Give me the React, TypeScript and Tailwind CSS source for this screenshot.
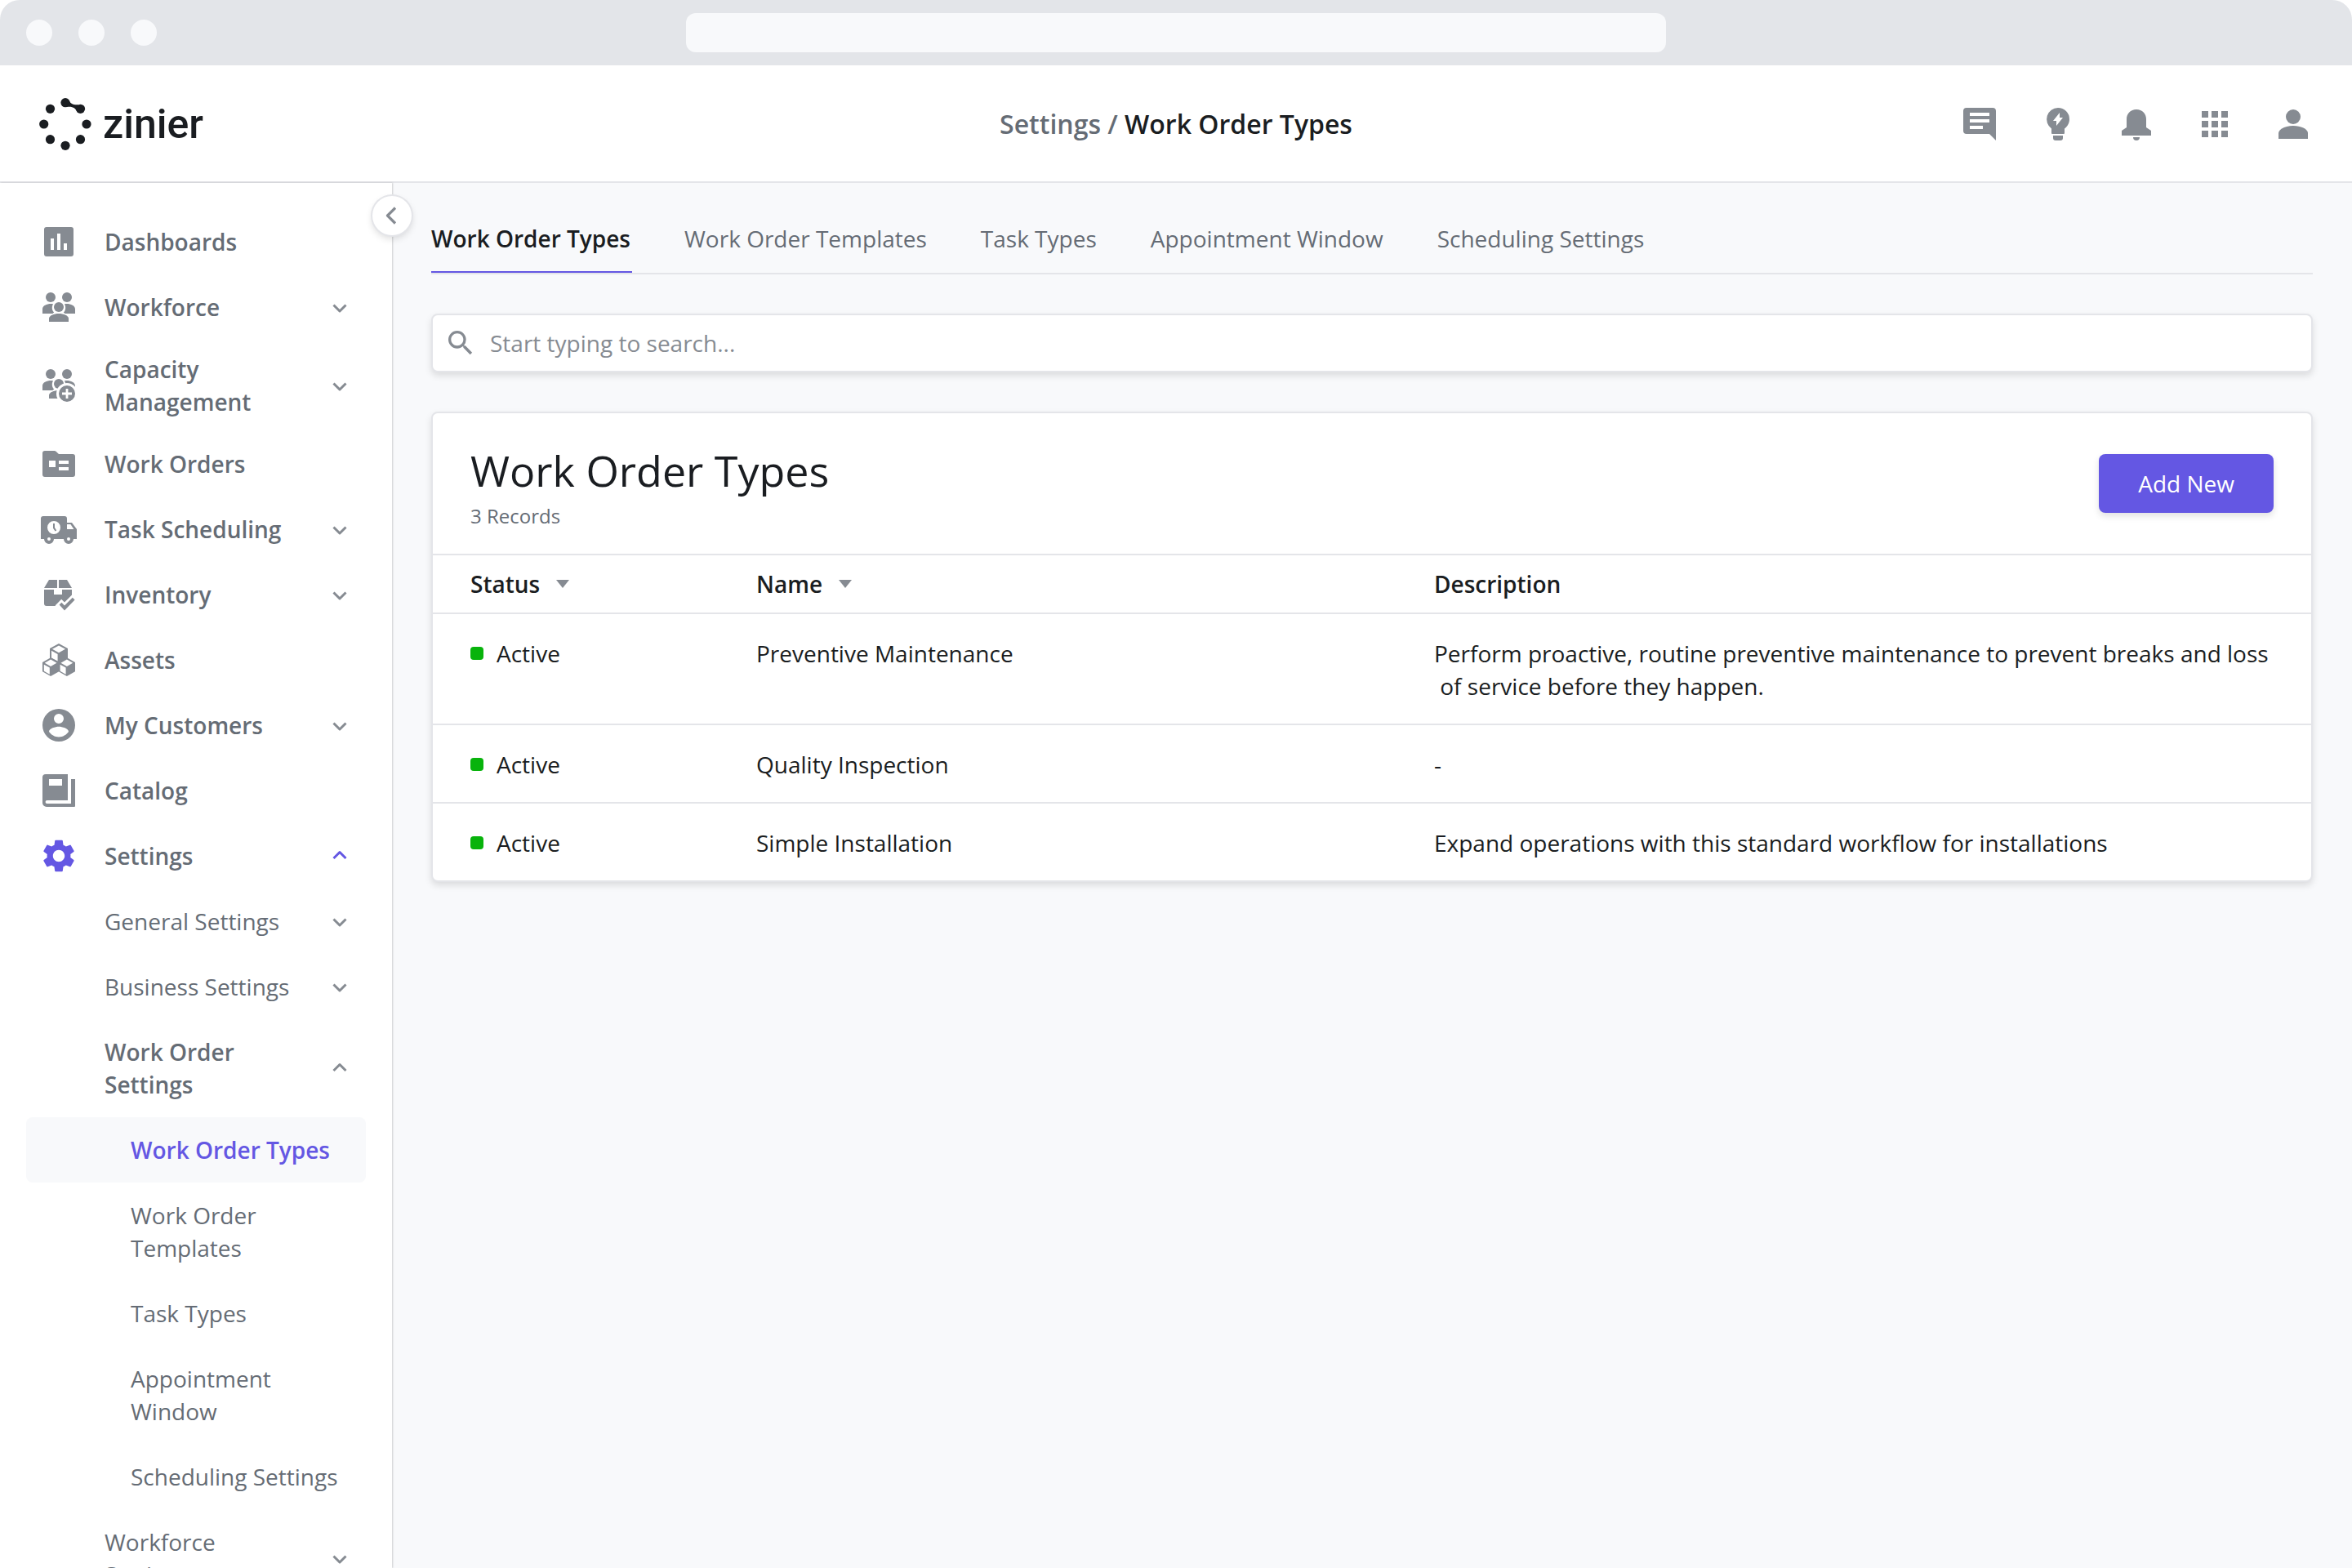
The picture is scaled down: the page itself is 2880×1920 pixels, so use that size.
import type { ReactNode } from "react";
import { clsx } from "clsx";
import { MdApps, MdSearch, MdSettings } from "react-icons/md";

const Icon = ({ children }: { children: ReactNode }) => (
  <svg viewBox="0 0 24 24" fill="currentColor" className="size-12 shrink-0" aria-hidden="true">
    {children}
  </svg>
);

const DashboardIcon = () => (
  <Icon>
    <path
      fillRule="evenodd"
      d="M4.5 3h15A1.5 1.5 0 0 1 21 4.5v15a1.5 1.5 0 0 1-1.5 1.5h-15A1.5 1.5 0 0 1 3 19.5v-15A1.5 1.5 0 0 1 4.5 3zM7 10v7h2v-7H7zm4-3v10h2V7h-2zm4 6v4h2v-4h-2z"
    />
  </Icon>
);

const WorkforceIcon = () => (
  <Icon>
    <circle cx="7" cy="6" r="3" />
    <circle cx="17" cy="6" r="3" />
    <path d="M2 16v-2.8C2 11.2 4.6 10 7.2 10c.5 0 .9 0 1.3.1-.6 1.1-.8 2.5-.4 3.7.2.6.5 1.1 1 1.5-.3.2-.6.4-.9.7H2z" />
    <path d="M22 16v-2.8C22 11.2 19.4 10 16.8 10c-.5 0-.9 0-1.3.1.6 1.1.8 2.5.4 3.7-.2.6-.5 1.1-1 1.5.3.2.6.4.9.7H22z" />
    <circle cx="12" cy="12" r="3" />
    <path d="M12 16c-3 0-6 1.3-6 3v2h12v-2c0-1.7-3-3-6-3z" />
  </Icon>
);

const CapacityIcon = () => (
  <Icon>
    <mask id="capacity-cut">
      <rect width="24" height="24" fill="white" />
      <circle cx="17" cy="17" r="6.5" fill="black" />
    </mask>
    <g mask="url(#capacity-cut)">
      <circle cx="7" cy="5" r="3" />
      <circle cx="17" cy="5" r="3" />
      <path d="M2 15v-2.8C2 10.2 4.6 9 7.2 9c.5 0 .9 0 1.3.1-.6 1.1-.8 2.5-.4 3.7.2.6.5 1.1 1 1.5-.3.2-.6.4-.9.7H2z" />
      <path d="M22 15v-2.8C22 10.2 19.4 9 16.8 9c-.5 0-.9 0-1.3.1.6 1.1.8 2.5.4 3.7L22 15z" />
      <circle cx="12" cy="11" r="3" />
      <path d="M12 15c-3 0-6 1.3-6 3v2h12v-2c0-1.7-3-3-6-3z" />
    </g>
    <path
      fillRule="evenodd"
      d="M17 12a5 5 0 1 1 0 10 5 5 0 0 1 0-10zm-.7 2v2.3H14v1.4h2.3V20h1.4v-2.3H20v-1.4h-2.3V14h-1.4z"
    />
  </Icon>
);

const WorkOrderIcon = () => (
  <Icon>
    <path
      fillRule="evenodd"
      d="M3.5 4h5.7c.5 0 .9.2 1.2.5L12 6h8.5A1.5 1.5 0 0 1 22 7.5v11a1.5 1.5 0 0 1-1.5 1.5h-17A1.5 1.5 0 0 1 2 18.5v-13A1.5 1.5 0 0 1 3.5 4zM6 10v4h4v-4H6zm6 0v2h6v-2h-6zm0 4v2h6v-2h-6z"
    />
  </Icon>
);

const TruckIcon = () => (
  <Icon>
    <path
      fillRule="evenodd"
      d="M2.5 4h13A1.5 1.5 0 0 1 17 5.5V8h3l3 4v6h-2a3 3 0 0 1-6 0H9a3 3 0 0 1-6 0H1V5.5A1.5 1.5 0 0 1 2.5 4zM9 7a4 4 0 1 0 0 8 4 4 0 0 0 0-8zm8 2v3h4.2l-2-3H17zM6 17a1 1 0 1 0 0 2 1 1 0 0 0 0-2zm12 0a1 1 0 1 0 0 2 1 1 0 0 0 0-2z"
    />
    <path d="M9 8.5v2.7l1.2 1.8" fill="none" stroke="currentColor" strokeWidth="1" />
  </Icon>
);

const InventoryIcon = () => (
  <Icon>
    <path d="M6 3h5v5H3l3-5zM12 3h5l3 5h-8V3z" />
    <path d="M3 9h6v3h5V9h6v3.2l-4.5 4.5-1.9-1.8L9.9 18.6V19H4.5A1.5 1.5 0 0 1 3 17.5V9z" />
    <path d="M12.3 18.3l3.2 3.4 6.3-6.4-1.4-1.4-4.9 4.9-1.8-1.9z" />
  </Icon>
);

const Cube = ({ transform }: { transform?: string }) => (
  <path
    transform={transform}
    fillRule="evenodd"
    d="M12 2l5.5 3v6L12 14l-5.5-3V5L12 2zm0 1.2L8 5.4l4 2.2 4-2.2-4-2.2zM7.5 6.4v4.3l3.8 2.1V8.5L7.5 6.4z"
  />
);

const AssetsIcon = () => (
  <Icon>
    <Cube />
    <Cube transform="translate(-4 8.8) scale(0.92 0.94)" />
    <Cube transform="translate(5.9 8.8) scale(0.92 0.94)" />
  </Icon>
);

const CustomersIcon = () => (
  <Icon>
    <path
      fillRule="evenodd"
      d="M12 2a10 10 0 1 1 0 20 10 10 0 0 1 0-20zm0 3a3 3 0 1 0 0 6 3 3 0 0 0 0-6zM6 16c1.3 1.9 3.5 3.2 6 3.2s4.7-1.3 6-3.2c0-2-4-3.1-6-3.1S6 14 6 16z"
    />
  </Icon>
);

const CatalogIcon = () => (
  <Icon>
    <path
      fillRule="evenodd"
      d="M4 2h13.5v16H4.8a.9.9 0 0 0 0 2h14.7V5H22v16.5a.5.5 0 0 1-.5.5H4.5A2.5 2.5 0 0 1 2 19.5V4a2 2 0 0 1 2-2zm2 3v4h8V5H6z"
    />
  </Icon>
);

const CommentIcon = () => (
  <Icon>
    <path
      fillRule="evenodd"
      d="M4 2h16a2 2 0 0 1 2 2v18l-4-4H4a2 2 0 0 1-2-2V4a2 2 0 0 1 2-2zm2 3v2h12V5H6zm0 4v2h12V9H6zm0 4v2h8v-2H6z"
    />
  </Icon>
);

const IdeaIcon = () => (
  <Icon>
    <path
      fillRule="evenodd"
      d="M12 2a7 7 0 0 1 7 7c0 2.4-1.2 4.5-3 5.7v2.8a.5.5 0 0 1-.5.5h-7a.5.5 0 0 1-.5-.5v-2.8A7 7 0 0 1 12 2zm1 3l-4 5h2v3l4-5h-2V5zM9 19h6v1.5a1.5 1.5 0 0 1-1.5 1.5h-3A1.5 1.5 0 0 1 9 20.5V19z"
    />
  </Icon>
);

const BellIcon = () => (
  <Icon>
    <path d="M12 3c3.6 0 6 2.5 6 6v5l3 2v3H3v-3l3-2V9c0-3.5 2.4-6 6-6zM10 20h4a2 2 0 0 1-4 0z" />
  </Icon>
);

const PersonIcon = () => (
  <Icon>
    <circle cx="12" cy="7.5" r="4.5" />
    <path d="M12 13c-4.5 0-9 1.9-9 4.5V21h18v-3.5c0-2.6-4.5-4.5-9-4.5z" />
  </Icon>
);

const Chevron = ({ up, active }: { up?: boolean; active?: boolean }) => (
  <svg
    viewBox="0 0 48 48"
    fill="none"
    stroke="currentColor"
    strokeWidth="3"
    strokeLinejoin="round"
    className={clsx("size-12 shrink-0", active ? "text-[#6457e3]" : "text-[#868b92]")}
    aria-hidden="true">
    {up ? <path d="M16.5 27l7.5-7.5 7.5 7.5" /> : <path d="M16.5 21.5l7.5 7.5 7.5-7.5" />}
  </svg>
);

const Logo = () => (
  <a href="#" aria-label="zinier" className="flex items-center gap-3.5 text-[#1a1d21]">
    <svg viewBox="0 0 64 64" fill="currentColor" className="size-16" aria-hidden="true">
      <circle cx="32" cy="5.7" r="5.6" />
      <circle cx="50.5" cy="13.3" r="5.6" />
      <circle cx="58" cy="32" r="5.6" />
      <circle cx="50.5" cy="50.7" r="5.6" />
      <circle cx="32" cy="58.3" r="5.6" />
      <circle cx="13.5" cy="50.7" r="5.6" />
      <circle cx="5.7" cy="32" r="5.6" />
      <circle cx="13.5" cy="13.3" r="5.6" />
      <path d="M36.5 2.5c1.3 4 4.5 6.2 11.5 5.8l-1.5 8.7c-2.5-4.5-5-6.8-12.5-6z" />
    </svg>
    <span className="font-['Roboto',sans-serif] text-[50px] leading-[56px] font-medium">zinier</span>
  </a>
);

type NavItem = { label: string; icon?: ReactNode; arrow?: "up" | "down"; active?: boolean; bold?: boolean };

const mainNav: NavItem[] = [
  { label: "Dashboards", icon: <DashboardIcon /> },
  { label: "Workforce", icon: <WorkforceIcon />, arrow: "down" },
  { label: "Capacity Management", icon: <CapacityIcon />, arrow: "down" },
  { label: "Work Orders", icon: <WorkOrderIcon /> },
  { label: "Task Scheduling", icon: <TruckIcon />, arrow: "down" },
  { label: "Inventory", icon: <InventoryIcon />, arrow: "down" },
  { label: "Assets", icon: <AssetsIcon /> },
  { label: "My Customers", icon: <CustomersIcon />, arrow: "down" },
  { label: "Catalog", icon: <CatalogIcon /> },
  { label: "Settings", icon: <MdSettings className="size-12 shrink-0" />, arrow: "up", active: true },
];

const settingsNav: NavItem[] = [
  { label: "General Settings", arrow: "down" },
  { label: "Business Settings", arrow: "down" },
  { label: "Work Order Settings", arrow: "up", bold: true },
];

const workOrderNav: NavItem[] = [
  { label: "Work Order Types", active: true },
  { label: "Work Order Templates" },
  { label: "Task Types" },
  { label: "Appointment Window" },
  { label: "Scheduling Settings" },
];

const MainLink = ({ item }: { item: NavItem }) => (
  <li>
    <a href="#" className="flex min-h-20 items-center gap-5 py-4 pr-2 pl-4 font-semibold">
      <span className={clsx("mr-3", item.active ? "text-[#6457e3]" : "text-[#868b92]")}>{item.icon}</span>
      <span className="flex-1">{item.label}</span>
      {item.arrow && <Chevron up={item.arrow === "up"} active={item.active} />}
    </a>
  </li>
);

const SettingsLink = ({ item }: { item: NavItem }) => (
  <li>
    <a href="#" className={clsx("flex items-center gap-5 pr-2 pl-24", item.bold && "font-semibold")}>
      <span className="flex-1 py-5">{item.label}</span>
      <Chevron up={item.arrow === "up"} />
    </a>
  </li>
);

const Sidebar = () => (
  <aside className="relative z-10 w-[480px] shrink-0 bg-white shadow-[1px_0_2px_rgba(0,0,0,0.18)]">
    <nav className="h-full overflow-hidden px-8 pt-8">
      <ul>
        {mainNav.map((item) => (
          <MainLink key={item.label} item={item} />
        ))}
        {settingsNav.map((item) => (
          <SettingsLink key={item.label} item={item} />
        ))}
        {workOrderNav.map((item) => (
          <li key={item.label}>
            <a
              href="#"
              className={clsx(
                "block rounded-lg py-5 pr-6 pl-32",
                item.active && "bg-[#f8f9fb] font-semibold text-[#6457e3]"
              )}>
              {item.label}
            </a>
          </li>
        ))}
        <SettingsLink item={{ label: "Workforce Settings", arrow: "down" }} />
      </ul>
    </nav>

    {/* Collapse toggle sits on the sidebar edge */}
    <button
      type="button"
      aria-label="Collapse sidebar"
      className="absolute top-4 -right-6 flex size-12 items-center justify-center rounded-full bg-white text-[#868b92] shadow-[0_0_0_2px_#e4e5e9,0_4px_10px_rgba(0,0,0,0.15)]">
      <svg
        viewBox="0 0 48 48"
        fill="none"
        stroke="currentColor"
        strokeWidth="3.2"
        strokeLinejoin="round"
        className="size-12"
        aria-hidden="true">
        <path d="M28 14.5L18.5 24l9.5 9.5" />
      </svg>
    </button>
  </aside>
);

const tabs = ["Work Order Types", "Work Order Templates", "Task Types", "Appointment Window", "Scheduling Settings"];

const records = [
  {
    name: "Preventive Maintenance",
    description:
      "Perform proactive, routine preventive maintenance to prevent breaks and loss \u00a0of service before they happen.",
  },
  { name: "Quality Inspection", description: "-" },
  { name: "Simple Installation", description: "Expand operations with this standard workflow for installations" },
];

const SortArrow = () => (
  <svg viewBox="0 0 16 10" fill="#868b92" className="h-2.5 w-4" aria-hidden="true">
    <path d="M0 0h16L8 10z" />
  </svg>
);

const panel = "rounded-lg border-2 border-[#e4e5e9] bg-white shadow-[0_4px_8px_rgba(0,0,0,0.12)]";

const RecordsTable = () => (
  <table className="w-full table-fixed border-separate border-spacing-0 text-left">
    <thead>
      <tr className="*:border-y-2 *:border-[#e4e5e9] *:py-[15px] *:font-semibold">
        <th scope="col" className="w-[396px] pl-[46px]">
          <button type="button" className="flex items-center gap-5">
            Status <SortArrow />
          </button>
        </th>
        <th scope="col" className="w-[830px]">
          <button type="button" className="flex items-center gap-5">
            Name <SortArrow />
          </button>
        </th>
        <th scope="col">Description</th>
      </tr>
    </thead>
    <tbody className="[&>tr:not(:last-child)>td]:border-b-2">
      {records.map((record) => (
        <tr key={record.name} className="align-top *:border-[#e4e5e9] *:pt-7 *:pb-[26px]">
          <td className="pl-[46px]">
            <span className="flex items-center gap-4">
              <span className="size-4 rounded bg-[#08b30c]" />
              Active
            </span>
          </td>
          <td>{record.name}</td>
          <td className="pr-12">{record.description}</td>
        </tr>
      ))}
    </tbody>
  </table>
);

export default function App() {
  return (
    <div className="flex h-screen flex-col overflow-hidden bg-white font-['Open_Sans',sans-serif] text-[28px] leading-10 text-[#656c75]">
      {/* Browser chrome */}
      <div className="grid h-20 shrink-0 grid-cols-[1fr_1200px_1fr] items-center rounded-t-3xl bg-[#e3e5e9] px-8">
        <div className="flex gap-8">
          <span className="size-8 rounded-full bg-[#f8f9fb]" />
          <span className="size-8 rounded-full bg-[#f8f9fb]" />
          <span className="size-8 rounded-full bg-[#f8f9fb]" />
        </div>
        <div className="h-12 rounded-xl bg-[#f8f9fb]" />
      </div>

      <header className="grid h-36 shrink-0 grid-cols-[1fr_auto_1fr] items-center border-b-2 border-[#e4e5e9] px-12 pt-0.5">
        <Logo />
        <h1 className="text-[32px] font-semibold">
          <a href="#">Settings</a> / <span className="text-[#1a1d21]">Work Order Types</span>
        </h1>
        <div className="flex justify-end gap-12 text-[#868b92]">
          <button type="button" aria-label="Messages"><CommentIcon /></button>
          <button type="button" aria-label="Ideas"><IdeaIcon /></button>
          <button type="button" aria-label="Notifications"><BellIcon /></button>
          <button type="button" aria-label="Apps"><MdApps className="size-12" /></button>
          <button type="button" aria-label="Account"><PersonIcon /></button>
        </div>
      </header>

      <div className="flex min-h-0 flex-1">
        <Sidebar />
        <main className="min-w-0 flex-1 bg-[#f8f9fb] px-12 pt-12">
          <nav className="flex gap-16 border-b-2 border-[#e4e5e9]">
            {tabs.map((tab, i) => (
              <a
                key={tab}
                href="#"
                className={clsx(
                  "border-b-2 pr-0.5 pb-5",
                  i === 0 ? "border-[#6457e3] font-semibold text-[#1a1d21]" : "border-transparent"
                )}>
                {tab}
              </a>
            ))}
          </nav>

          <label className={clsx(panel, "mt-12 flex h-18 items-center gap-4 px-3.5")}>
            <MdSearch className="size-10 shrink-0 text-[#868b92]" />
            <input
              type="search"
              aria-label="Search"
              placeholder="Start typing to search..."
              className="flex-1 bg-transparent outline-none placeholder:text-[#868b92]"
            />
          </label>

          <section className={clsx(panel, "mt-12 text-[#1a1d21]")}>
            <div className="flex items-start justify-between px-[46px] pt-[34px] pb-[26px]">
              <div>
                <h2 className="text-[52px] leading-[72px]">Work Order Types</h2>
                <p className="text-2xl leading-10 text-[#656c75]">3 Records</p>
              </div>
              <button
                type="button"
                className="mt-4 h-18 rounded-lg bg-[#6457e3] px-12 text-white shadow-[0_4px_8px_rgba(0,0,0,0.12)]">
                Add New
              </button>
            </div>
            <RecordsTable />
          </section>
        </main>
      </div>
    </div>
  );
}
